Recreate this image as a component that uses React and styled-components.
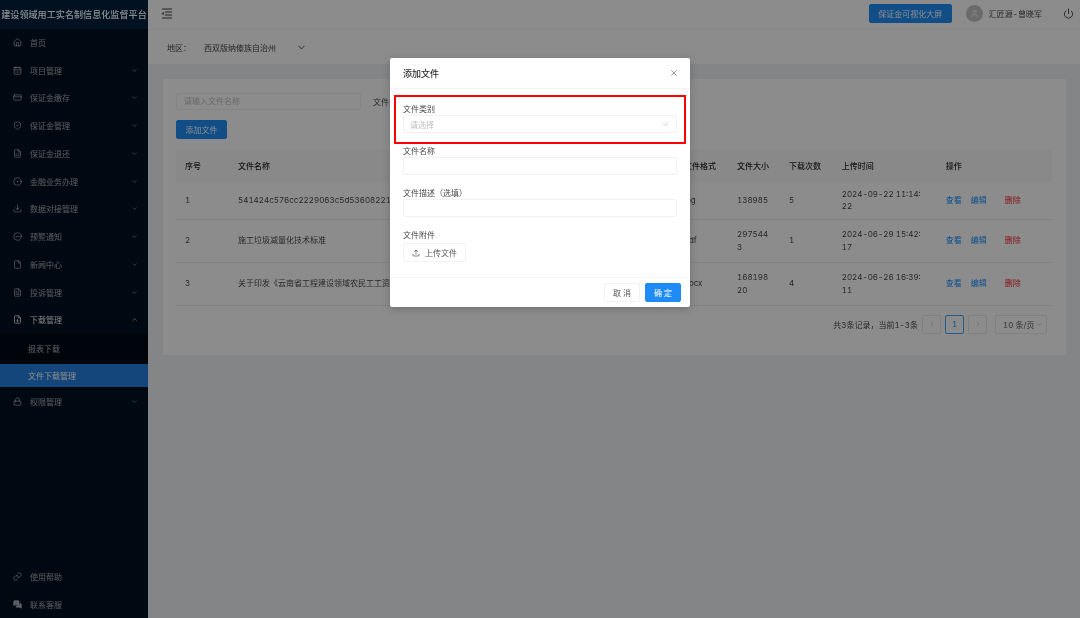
import React from "react";
import styled, { createGlobalStyle } from "styled-components";
import {
  House, CalendarDays, CreditCard, ShieldCheck, FileSpreadsheet, CircleDot, Download,
  CircleMinus, File, FileText, FileDown, Lock, Link, MessagesSquare, ChevronDown, ChevronUp,
  ChevronLeft, ChevronRight, X, Upload, Power, User,
} from "lucide-react";

const Global = createGlobalStyle`
  html, body { margin: 0; padding: 0; background: #fff; }
  * { box-sizing: border-box; }
  body {
    font-family: "Inter", "Noto Sans CJK SC", sans-serif; font-size: 8px; color: rgba(0,0,0,.75);
    font-variant-numeric: tabular-nums;
  }
`;

const Page = styled.div`
  position: relative; width: 1080px; height: 618px; display: flex; overflow: hidden; filter: blur(.45px);
`;
const Sidebar = styled.aside`
  width: 148px; flex: none; background: #001222; display: flex; flex-direction: column; color: rgba(255,255,255,.65);
`;
const Brand = styled.div`
  height: 28.5px; flex: none; background: #04203f; color: #fff; font-size: 9.1px; font-weight: 500;
  display: flex; align-items: center; justify-content: center; white-space: nowrap; overflow: hidden;
`;
const Menu = styled.nav`
  display: flex; flex-direction: column;
  &:last-child { margin-top: auto; }
`;
const MenuItem = styled.div`
  height: 27.75px; display: flex; align-items: center; padding: 0 10px 0 13px; gap: 8px;
  color: ${(p) => (p.$open ? "rgba(255,255,255,.92)" : "rgba(255,255,255,.62)")};
  & > span { flex: 1; }
`;
const SubMenu = styled.div`
  background: #000914; display: flex; flex-direction: column; padding-top: 1px;
`;
const SubItem = styled.div`
  height: ${(p) => (p.$active ? "23px" : "27px")}; display: flex; align-items: center; padding-left: 28px;
  margin-top: ${(p) => (p.$active ? "2.5px" : "0")};
  background: ${(p) => (p.$active ? "#2580e0" : "transparent")};
  color: ${(p) => (p.$active ? "#fff" : "rgba(255,255,255,.65)")};
`;
const Main = styled.main`
  flex: 1; min-width: 0; display: flex; flex-direction: column; background: #f0f2f5;
`;
const Header = styled.header`
  height: 30px; flex: none; background: #fff; border-bottom: 1px solid #f5f5f5; display: flex; align-items: center;
  padding: 0 6px 2px 13px;
`;
const Screen = styled.button`
  width: 83px; height: 19px; margin-left: auto; border: 1px solid #1f8cf5; border-radius: 2px; background: #1f8cf5;
  color: #fff; font: inherit; padding: 0;
`;
const Avatar = styled.div`
  width: 17px; height: 17px; margin-left: 14px; border-radius: 50%; background: #c4c4c4; color: #fff;
  display: flex; align-items: center; justify-content: center;
`;
const UserName = styled.div`
  margin: 0 21px 0 6px; white-space: nowrap;
`;
const RegionBar = styled.div`
  height: 34px; flex: none; background: #fff; display: flex; align-items: center; padding-left: 19px;
`;
const RegionLabel = styled.span`
  width: 37px;
`;
const RegionValue = styled.span`
  width: 92px;
`;
const Content = styled.div`
  padding: 15px 14px 0 15px;
`;
const Card = styled.section`
  height: 276px; background: #fff; padding: 14px 14px 0 13px;
`;
const Filters = styled.div`
  display: flex; align-items: center; height: 17px;
`;
const FilterInput = styled.div`
  width: 185px; height: 17px; border: 1px solid #f2f2f2; border-radius: 2px; padding: 0 7px; line-height: 15px; color: #bfbfbf;
`;
const FilterLabel = styled.span`
  margin-left: 12px;
`;
const PrimaryButton = styled.button`
  display: block; width: ${(p) => p.$w}px; height: 19px; border: 1px solid #1f8cf5; border-radius: 2px; background: #1f8cf5;
  color: #fff; font: inherit; padding: 0; margin: ${(p) => p.$m || 0};
`;
const Table = styled.table`
  width: 876px; table-layout: fixed; border-collapse: collapse; line-height: 12.5px;
`;
const Th = styled.th`
  height: 32px; padding: 0 9px; background: #fafafa; text-align: left; font-weight: 500; color: rgba(0,0,0,.85);
`;
const Td = styled.td`
  height: ${(p) => p.$h}px; padding: 0 11px 0 9px; border-bottom: 1px solid #efefef; word-break: break-all;
`;
const NameCell = styled(Td)`
  white-space: nowrap; overflow: hidden;
`;
const ActionsCell = styled(Td)`
  white-space: nowrap; padding-right: 0;
`;
const ActionLink = styled.span`
  display: inline-block; margin-right: ${(p) => p.$gap}px; color: ${(p) => (p.$danger ? "#f5222d" : "#1890ff")};
`;
const Pagination = styled.div`
  display: flex; align-items: center; justify-content: flex-end; margin-top: 9px; padding-right: 5px; gap: 4px;
`;
const PageBox = styled.div`
  width: 19px; height: 19px; border: 1px solid ${(p) => (p.$active ? "#40a9ff" : "#ececec")}; border-radius: 2px;
  display: flex; align-items: center; justify-content: center;
  color: ${(p) => (p.$active ? "#1890ff" : "#c4c4c4")};
`;
const SizeBox = styled.div`
  width: 52px; height: 19px; margin-left: 4px; border: 1px solid #ececec; border-radius: 2px; color: rgba(0,0,0,.65);
  display: flex; align-items: center; justify-content: space-between; padding: 0 3px 0 7px; white-space: nowrap;
`;
const Overlay = styled.div`
  position: absolute; inset: 0; background: rgba(0,0,0,.45); display: flex; justify-content: center; align-items: flex-start;
`;
const Modal = styled.div`
  position: relative; width: 300px; height: 249px; margin-top: 58px; background: #fff; border-radius: 2px; display: flex; flex-direction: column;
  box-shadow: 0 2px 8px rgba(0,0,0,.2);
`;
const ModalHead = styled.div`
  height: 31px; flex: none; border-bottom: 1px solid #f2f2f2; display: flex; align-items: center; justify-content: space-between;
  padding: 0 11px 0 13px; font-size: 9px; font-weight: 500; color: rgba(0,0,0,.85);
  & svg { color: #8c8c8c; }
`;
const Form = styled.div`
  flex: 1; padding: 14px 13px 0; display: flex; flex-direction: column; gap: 12px;
`;
const Field = styled.div`
  display: flex; flex-direction: column;
`;
const FieldLabel = styled.label`
  height: 12px; line-height: 12px;
`;
const FieldBox = styled.div`
  height: 18px; border: 1px solid #f2f2f2; border-radius: 2px; display: flex; align-items: center; justify-content: space-between;
  padding: 0 6px; color: #bfbfbf;
`;
const UploadButton = styled.button`
  width: 63px; height: 19px; margin-top: 2px; border: 1px solid #f2f2f2; border-radius: 2px; background: #fff; color: rgba(0,0,0,.7);
  font: inherit; padding: 0; display: flex; align-items: center; justify-content: center; gap: 5px;
`;
const ModalFoot = styled.div`
  height: 30px; flex: none; border-top: 1px solid #f5f5f5; display: flex; justify-content: flex-end; align-items: center; gap: 5px; padding: 0 9px;
`;
const GhostButton = styled.button`
  width: 36px; height: 19px; border: 1px solid #f2f2f2; border-radius: 2px; background: #fff; font: inherit; color: rgba(0,0,0,.7); padding: 0;
`;
const Annotation = styled.div`
  position: absolute; left: 3.5px; top: 37px; width: 292px; height: 49px; border: 2px solid #f00; pointer-events: none;
`;

const FoldIcon = () => (
  <svg width="12" height="11" viewBox="0 0 12 11" fill="none" stroke="currentColor" strokeWidth="1">
    <path d="M1 1h10M4 4h7M4 7h7M1 10h10" />
    <path d="M0.5 5.5 2.8 4v3z" fill="currentColor" stroke="none" />
  </svg>
);

const items = [
  [CalendarDays, "项目管理"], [CreditCard, "保证金缴存"], [ShieldCheck, "保证金管理"], [FileSpreadsheet, "保证金退还"],
  [CircleDot, "金融业务办理"], [Download, "数据对接管理"], [CircleMinus, "预警通知"], [File, "新闻中心"], [FileText, "投诉管理"],
];

const rows = [
  ["1", "541424c576cc2229063c5d536082219a7d3e", "jpg", "138985", "5", "2024-09-22 11:14:22", 37],
  ["2", "施工垃圾减量化技术标准", "pdf", "2975443", "1", "2024-06-29 15:42:17", 43],
  ["3", "关于印发《云南省工程建设领域农民工工资支付保证金实施细则》的通知", "docx", "16819820", "4", "2024-06-26 16:39:11", 43],
];

export default function App() {
  return (
    <Page>
      <Global />
      <Sidebar>
        <Brand>建设领域用工实名制信息化监督平台</Brand>
        <Menu>
          <MenuItem><House size={9} /><span>首页</span></MenuItem>
          {items.map(([Icon, label]) => (
            <MenuItem key={label}><Icon size={9} /><span>{label}</span><ChevronDown size={7} /></MenuItem>
          ))}
          <MenuItem $open><FileDown size={9} /><span>下载管理</span><ChevronUp size={7} /></MenuItem>
          <SubMenu>
            <SubItem>报表下载</SubItem>
            <SubItem $active>文件下载管理</SubItem>
          </SubMenu>
          <MenuItem><Lock size={9} /><span>权限管理</span><ChevronDown size={7} /></MenuItem>
        </Menu>
        <Menu>
          <MenuItem><Link size={9} /><span>使用帮助</span></MenuItem>
          <MenuItem><MessagesSquare size={9} fill="currentColor" /><span>联系客服</span></MenuItem>
        </Menu>
      </Sidebar>
      <Main>
        <Header>
          <FoldIcon />
          <Screen>保证金可视化大屏</Screen>
          <Avatar><User size={9} /></Avatar>
          <UserName>汇匠源-曾晓军</UserName>
          <Power size={11} />
        </Header>
        <RegionBar>
          <RegionLabel>地区：</RegionLabel>
          <RegionValue>西双版纳傣族自治州</RegionValue>
          <ChevronDown size={11} />
        </RegionBar>
        <Content>
          <Card>
            <Filters>
              <FilterInput>请输入文件名称</FilterInput>
              <FilterLabel>文件类型</FilterLabel>
            </Filters>
            <PrimaryButton $w={51} $m="10px 0 11px">添加文件</PrimaryButton>
            <Table>
              <colgroup>
                <col width="53" /><col width="446" /><col width="53" /><col width="52" /><col width="52.7" /><col width="104" /><col width="115.3" />
              </colgroup>
              <thead>
                <tr>
                  {["序号", "文件名称", "文件格式", "文件大小", "下载次数", "上传时间", "操作"].map((h) => <Th key={h}>{h}</Th>)}
                </tr>
              </thead>
              <tbody>
                {rows.map((r) => (
                  <tr key={r[0]}>
                    <Td $h={r[6]}>{r[0]}</Td>
                    <NameCell $h={r[6]}>{r[1]}</NameCell>
                    <Td $h={r[6]}>{r[2]}</Td>
                    <Td $h={r[6]}>{r[3]}</Td>
                    <Td $h={r[6]}>{r[4]}</Td>
                    <Td $h={r[6]}>{r[5]}</Td>
                    <ActionsCell $h={r[6]}>
                      <ActionLink $gap={9}>查看</ActionLink>
                      <ActionLink $gap={18}>编辑</ActionLink>
                      <ActionLink $danger $gap={0}>删除</ActionLink>
                    </ActionsCell>
                  </tr>
                ))}
              </tbody>
            </Table>
            <Pagination>
              <span>共3条记录，当前1-3条</span>
              <PageBox><ChevronLeft size={8} /></PageBox>
              <PageBox $active>1</PageBox>
              <PageBox><ChevronRight size={8} /></PageBox>
              <SizeBox>10 条/页<ChevronDown size={7} color="#bfbfbf" /></SizeBox>
            </Pagination>
          </Card>
        </Content>
      </Main>
      <Overlay>
        <Modal>
          <ModalHead>添加文件<X size={10} /></ModalHead>
          <Form>
            <Field>
              <FieldLabel>文件类别</FieldLabel>
              <FieldBox>请选择<ChevronDown size={9} /></FieldBox>
            </Field>
            <Field>
              <FieldLabel>文件名称</FieldLabel>
              <FieldBox />
            </Field>
            <Field>
              <FieldLabel>文件描述（选填）</FieldLabel>
              <FieldBox />
            </Field>
            <Field>
              <FieldLabel>文件附件</FieldLabel>
              <UploadButton><Upload size={8} />上传文件</UploadButton>
            </Field>
          </Form>
          <ModalFoot>
            <GhostButton>取 消</GhostButton>
            <PrimaryButton $w={36}>确 定</PrimaryButton>
          </ModalFoot>
          <Annotation />
        </Modal>
      </Overlay>
    </Page>
  );
}
